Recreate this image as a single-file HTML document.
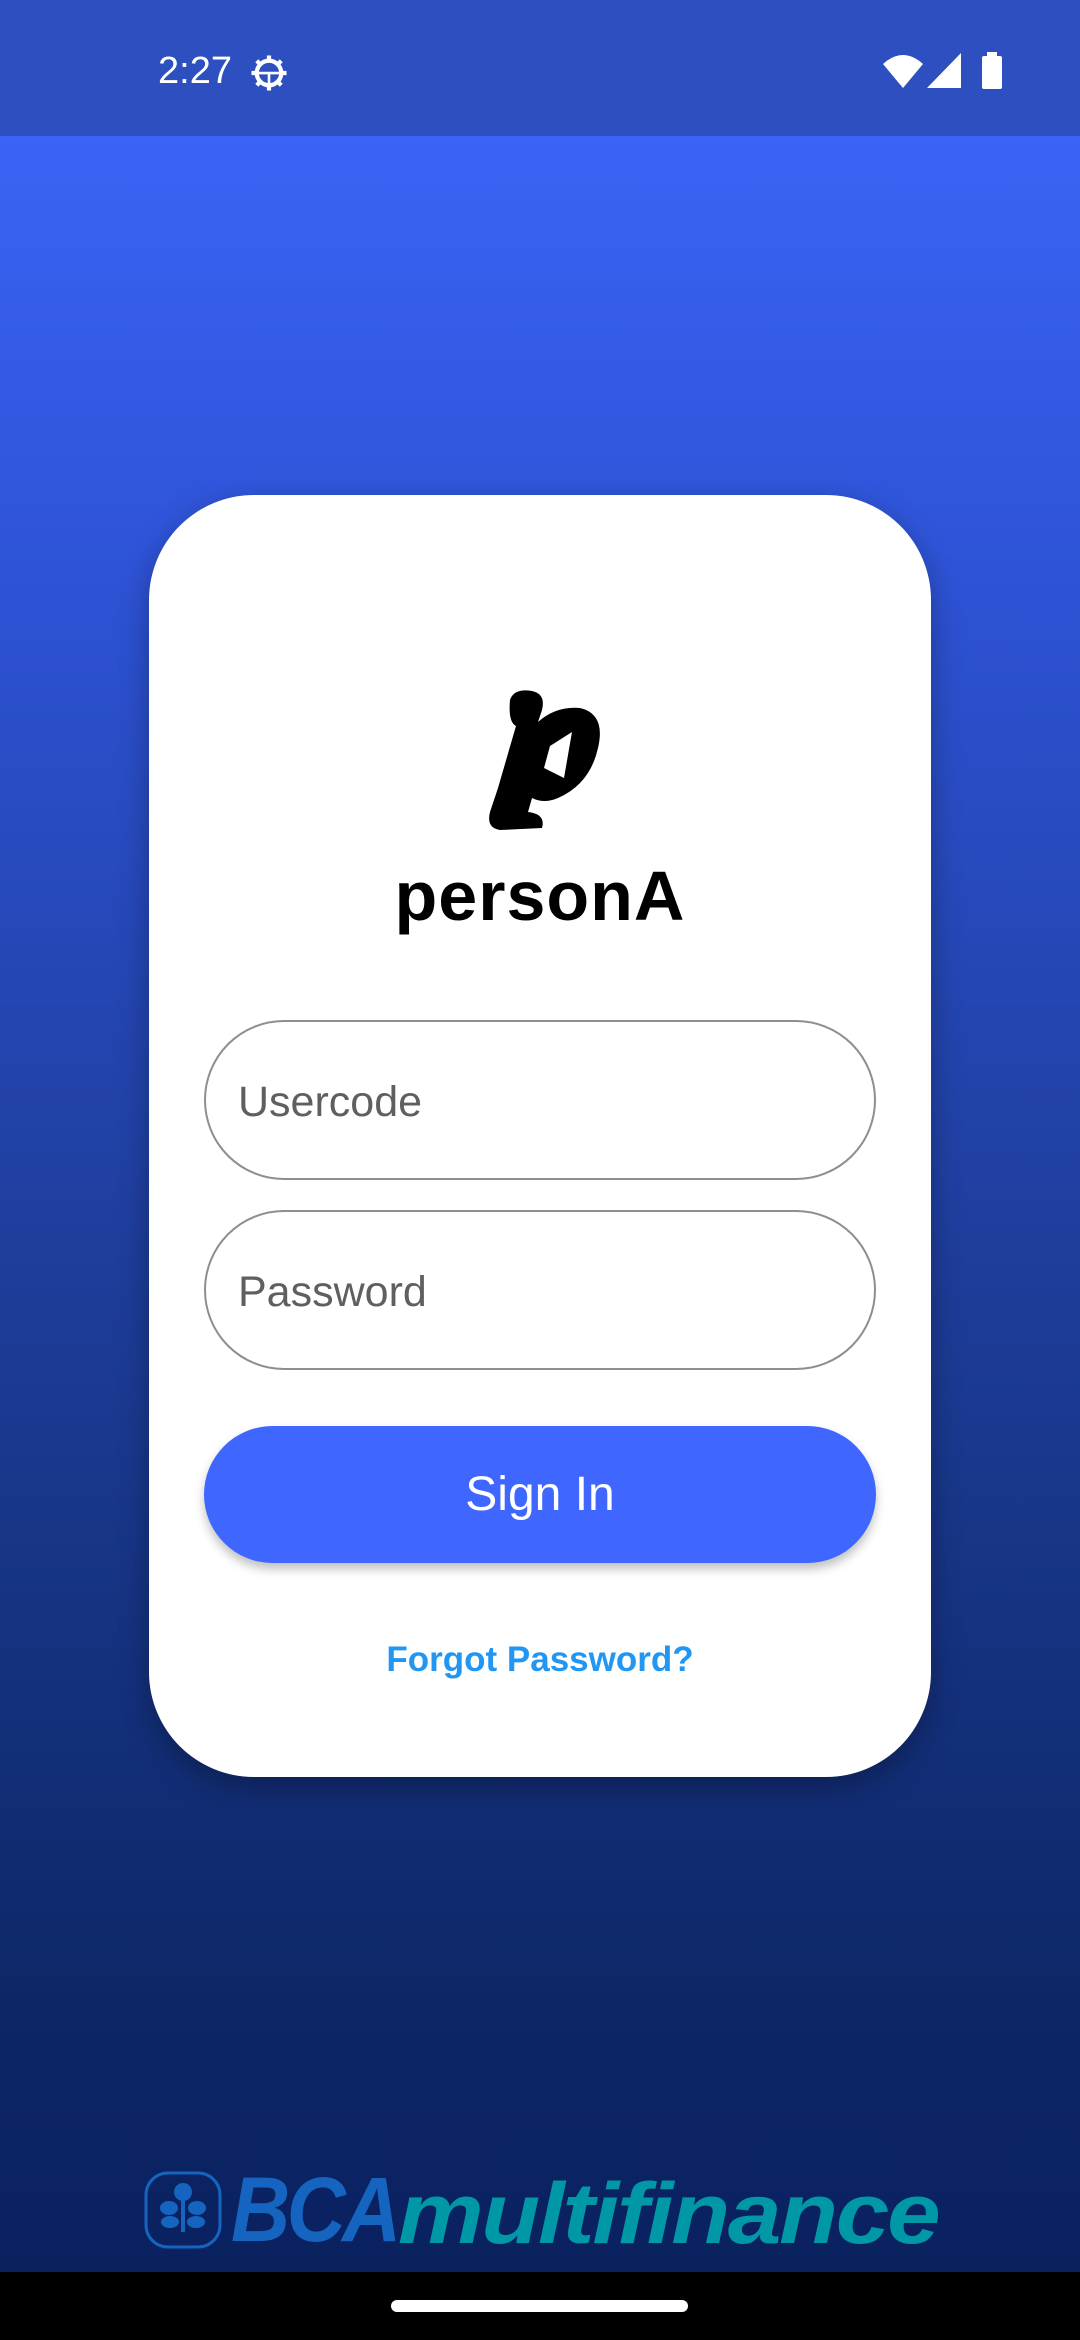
<!DOCTYPE html>
<html><head><meta charset="utf-8"><style>
*{margin:0;padding:0;box-sizing:border-box}
body{width:1080px;height:2340px;overflow:hidden;position:relative;font-family:"Liberation Sans",sans-serif;background:linear-gradient(180deg,#3b63f6 136px,#2d52d4 600px,#1d3c98 1300px,#0d2766 2000px,#0a2160 2272px)}
.sb{position:absolute;left:0;top:0;width:1080px;height:136px;background:#2d4fbf}
.time{position:absolute;left:158px;top:50px;color:#fff;font-size:38px}
.card{position:absolute;left:149px;top:495px;width:782px;height:1282px;background:#fff;border-radius:105px;box-shadow:0 10px 30px rgba(0,0,0,.3)}
.title{position:absolute;left:0;width:100%;top:856px;text-align:center;font-size:70px;font-weight:bold;color:#000;letter-spacing:1px}
.inp{position:absolute;left:204px;width:672px;height:160px;border:2px solid #8e8e8e;border-radius:80px;font-size:43px;color:#5f5f5f;padding:56px 0 0 32px;background:#fff}
.btn{position:absolute;left:204px;top:1426px;width:672px;height:137px;border-radius:69px;background:#3f67ff;color:#fff;font-size:48px;text-align:center;line-height:137px;box-shadow:0 6px 10px rgba(0,0,0,.25)}
.fp{position:absolute;left:0;width:100%;top:1640px;text-align:center;color:#2196f3;font-size:35px;font-weight:bold}
.nav{position:absolute;left:0;top:2272px;width:1080px;height:68px;background:#000}
.pill{position:absolute;left:391px;top:2300px;width:297px;height:12px;border-radius:6px;background:#fff}
.bca{position:absolute;top:2160px;font-style:italic;font-weight:900;font-size:92px;letter-spacing:-4px;line-height:100px;transform-origin:left center;white-space:nowrap}
</style></head><body>
<div class="sb">
<div class="time">2:27</div>
<svg style="position:absolute;left:248px;top:52px" width="42" height="42" viewBox="0 0 24 24"><g fill="none" stroke="#fff" stroke-width="2.4"><circle cx="12" cy="12" r="7"/><path d="M12 2v3M12 19v3M2 12h3M19 12h3M5 5l2 2M17 17l2 2M5 19l2-2M17 7l2-2"/></g><path d="M6 12h12M12 12v7" stroke="#fff" stroke-width="1.5"/></svg>
<svg style="position:absolute;left:883px;top:52px" width="40" height="36" viewBox="0 0 40 36"><path d="M0 12 Q20 -6 40 12 L20 36Z" fill="#fff"/></svg>
<svg style="position:absolute;left:927px;top:53px" width="34" height="35"><path d="M0 35 L34 0 V35Z" fill="#fff"/></svg>
<div style="position:absolute;left:982px;top:56px;width:20px;height:33px;background:#fff;border-radius:2px"></div>
<div style="position:absolute;left:987px;top:52px;width:10px;height:5px;background:#fff"></div>
</div>
<div class="card"></div>
<svg style="position:absolute;left:488px;top:688px" width="115" height="142" viewBox="0 0 115 142"><g fill="#000"><path d="M22 12 Q26 0 44 3 Q58 6 54 22 L50 34 Q68 18 92 20 Q118 26 110 60 Q102 96 70 110 Q56 116 44 110 L40 124 Q58 126 54 140 L12 142 Q-2 140 2 124 L10 100 L28 38 Q20 34 22 12Z"/></g><path d="M62 58 L84 44 L76 90 L56 80Z" fill="#fff"/></svg>
<div class="title">personA</div>
<div class="inp" style="top:1020px">Usercode</div>
<div class="inp" style="top:1210px">Password</div>
<div class="btn">Sign In</div>
<div class="fp">Forgot Password?</div>
<svg style="position:absolute;left:143px;top:2170px" width="80" height="80" viewBox="0 0 80 80"><rect x="3" y="3" width="74" height="74" rx="22" fill="none" stroke="#1565c0" stroke-width="3"/><g fill="#1565c0"><circle cx="40" cy="22" r="9"/><ellipse cx="26" cy="38" rx="9" ry="7"/><ellipse cx="54" cy="38" rx="9" ry="7"/><ellipse cx="27" cy="52" rx="9" ry="6"/><ellipse cx="53" cy="52" rx="9" ry="6"/><rect x="38" y="28" width="4" height="34"/></g></svg>
<div class="bca" style="left:231px;color:#1565c0;transform:scaleX(0.89)">BCA</div>
<div class="bca" style="left:398px;color:#0097a7;font-size:86px;letter-spacing:-2px;top:2164px;transform:scaleX(1.12)">multifinance</div>
<div class="nav"></div><div class="pill"></div>
</body></html>
